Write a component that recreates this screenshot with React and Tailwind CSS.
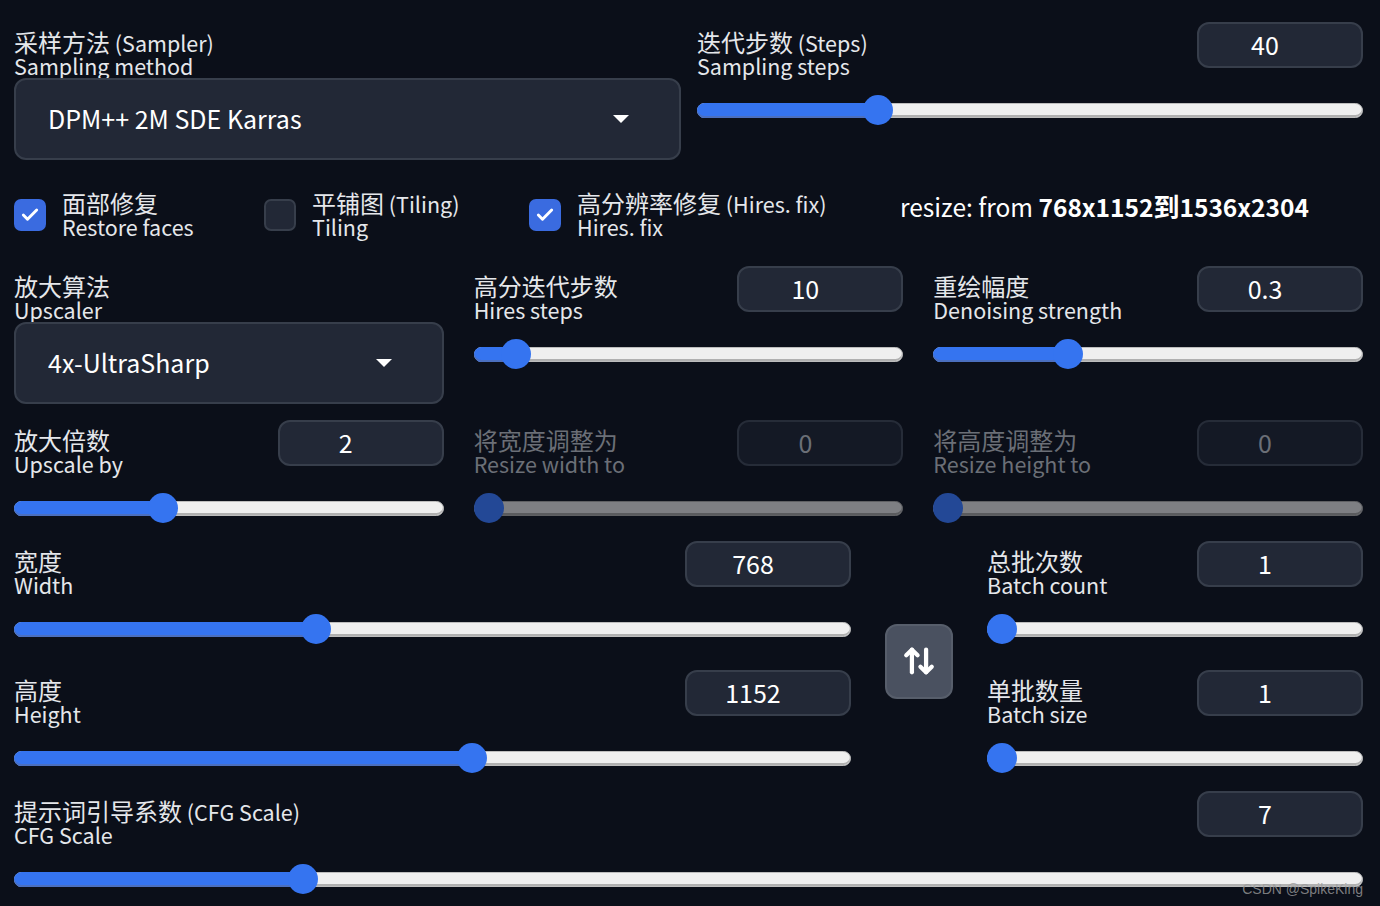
import React from "react";
import { ArrowUpDown, Check } from "lucide-react";

// chữ trộn: Hán 24px, Latin nhỏ hơn một chút
function T({ text, latin = "text-[21.5px]" }) {
  const parts = text.split(/([\u4e00-\u9fff]+)/).filter((s) => s !== "");
  return (
    <>
      {parts.map((s, i) =>
        /[\u4e00-\u9fff]/.test(s) ? (
          <span key={i}>{s}</span>
        ) : (
          <span key={i} className={latin}>
            {s}
          </span>
        )
      )}
    </>
  );
}

// thanh trượt
function Slider({ p, disabled }) {
  const track = disabled
    ? "bg-[#7e7f83] border border-[#5f6063] shadow-[inset_0_-2px_0_#5a5b5e]"
    : "bg-[#efefef] border border-[#bdbdbd] shadow-[inset_0_-2px_0_#b0b0b0]";
  const fill = disabled ? "bg-[#7e7f83]" : "bg-[#3574f0] shadow-[inset_0_-2px_0_#4b6fbf]";
  const thumb = disabled ? "bg-[#234896]" : "bg-[#3574f0]";
  return (
    <div className="relative h-[30px] flex items-center">
      <div className={`h-[15px] w-full rounded-full ${track}`}></div>
      <div
        className={`absolute left-0 h-[15px] rounded-l-full ${fill}`}
        style={{ width: `calc(${p} * (100% - 30px) + 15px)` }}
      ></div>
      <div
        className={`absolute top-0 w-[30px] h-[30px] rounded-full ${thumb}`}
        style={{ left: `calc(${p} * (100% - 30px))` }}
      ></div>
    </div>
  );
}

function Label({ zh, en, disabled }) {
  return (
    <div
      className={`pt-[8px] text-[24px] leading-[24px] h-[56px] ${
        disabled ? "text-[#6b6f77]" : "text-[#e5e7eb]"
      }`}
    >
      <div className="h-[24px] whitespace-nowrap">
        <T text={zh} />
      </div>
      <div className="h-[24px] whitespace-nowrap text-[21.5px] leading-[23px]">{en}</div>
    </div>
  );
}

function NumBox({ value, disabled }) {
  return (
    <div
      className={`w-[166px] h-[46px] rounded-[12px] border-2 flex items-center justify-center pr-[30px] text-[25px] ${
        disabled
          ? "bg-[#141925] border-[#262c38] text-[#6b6f77]"
          : "bg-[#222836] border-[#373e4b] text-white"
      }`}
    >
      {value}
    </div>
  );
}

function SliderBlock({ zh, en, value, p, disabled }) {
  return (
    <div className="flex flex-col">
      <div className="flex justify-between items-start">
        <Label zh={zh} en={en} disabled={disabled} />
        <NumBox value={value} disabled={disabled} />
      </div>
      <div className="mt-[17px]">
        <Slider p={p} disabled={disabled} />
      </div>
    </div>
  );
}

function Select({ value, pr }) {
  return (
    <div
      className={`h-[82px] rounded-[12px] border-2 border-[#373e4b] bg-[#222836] flex items-center justify-between pl-[32px] text-white text-[25px] ${pr}`}
    >
      <span>{value}</span>
      <span className="w-0 h-0 border-l-[8px] border-r-[8px] border-t-[8px] border-l-transparent border-r-transparent border-t-white"></span>
    </div>
  );
}

function CheckItem({ checked, zh, en, width }) {
  return (
    <div className={`flex items-center gap-4 ${width}`}>
      <div
        className={`w-[32px] h-[32px] rounded-[7px] flex items-center justify-center ${
          checked ? "bg-[#3a6be0]" : "bg-[#222836] border-2 border-[#373e4b]"
        }`}
      >
        {checked && <Check size={20} strokeWidth={3.5} color="white" />}
      </div>
      <div className="text-[24px] leading-[24px] text-[#e5e7eb] whitespace-nowrap">
        <div className="h-[24px]">
          <T text={zh} />
        </div>
        <div className="h-[24px] text-[21.5px] leading-[23px]">{en}</div>
      </div>
    </div>
  );
}

export default function App() {
  return (
    <div className="relative w-[1380px] h-[906px] overflow-hidden bg-[#0b0f19] pl-[14px] pr-[17px] pt-[22px] font-['Noto_Sans_CJK_SC','Noto_Sans',sans-serif]">
      {/* Sampler + Steps */}
      <div className="flex gap-4">
        <div className="w-[667px] flex flex-col">
          <Label zh="采样方法 (Sampler)" en="Sampling method" />
          <Select value="DPM++ 2M SDE Karras" pr="pr-[50px]" />
        </div>
        <div className="flex-1">
          <div className="flex justify-between items-start">
            <Label zh="迭代步数 (Steps)" en="Sampling steps" />
            <NumBox value="40" />
          </div>
          <div className="mt-[17px]">
            <Slider p={0.261} />
          </div>
        </div>
      </div>

      {/* checkboxes */}
      <div className="flex items-center mt-[31px] h-[48px]">
        <CheckItem checked zh="面部修复" en="Restore faces" width="w-[250px]" />
        <CheckItem zh="平铺图 (Tiling)" en="Tiling" width="w-[265px]" />
        <CheckItem checked zh="高分辨率修复 (Hires. fix)" en="Hires. fix" width="w-[371px]" />
        <div className="self-start h-[32px] leading-[30px] text-[26px] text-white whitespace-nowrap">
          <span className="text-[24.5px]">resize: from </span>
          <span className="text-[24.5px] font-bold">768x1152</span>
          <span className="font-bold">到</span>
          <span className="text-[24.5px] font-bold">1536x2304</span>
        </div>
      </div>

      {/* hires row 1 */}
      <div className="grid grid-cols-3 gap-[30px] mt-[27px]">
        <div className="flex flex-col">
          <Label zh="放大算法" en="Upscaler" />
          <Select value="4x-UltraSharp" pr="pr-[50px]" />
        </div>
        <SliderBlock zh="高分迭代步数" en="Hires steps" value="10" p={0.068} />
        <SliderBlock zh="重绘幅度" en="Denoising strength" value="0.3" p={0.3} />
      </div>

      {/* hires row 2 */}
      <div className="grid grid-cols-3 gap-[30px] mt-[16px]">
        <SliderBlock zh="放大倍数" en="Upscale by" value="2" p={0.335} />
        <SliderBlock zh="将宽度调整为" en="Resize width to" value="0" p={0} disabled />
        <SliderBlock zh="将高度调整为" en="Resize height to" value="0" p={0} disabled />
      </div>

      {/* width / height / batch */}
      <div className="flex items-center gap-[34px] mt-[18px]">
        <div className="w-[837px] flex flex-col gap-[26px]">
          <SliderBlock zh="宽度" en="Width" value="768" p={0.356} />
          <SliderBlock zh="高度" en="Height" value="1152" p={0.549} />
        </div>
        <div className="w-[68px] h-[75px] mt-[8px] rounded-[12px] bg-[#4a5160] border-2 border-[#575e6b] flex items-center justify-center">
          <ArrowUpDown size={34} strokeWidth={3} color="white" />
        </div>
        <div className="flex-1 flex flex-col gap-[26px]">
          <SliderBlock zh="总批次数" en="Batch count" value="1" p={0} />
          <SliderBlock zh="单批数量" en="Batch size" value="1" p={0} />
        </div>
      </div>

      {/* CFG */}
      <div className="mt-[18px]">
        <SliderBlock zh="提示词引导系数 (CFG Scale)" en="CFG Scale" value="7" p={0.208} />
      </div>

      <div className="absolute right-[17px] bottom-[9px] text-[14px] leading-[16px] text-[#9a9a9a]/80 font-['Liberation_Sans',sans-serif]">
        CSDN @SpikeKing
      </div>
    </div>
  );
}
